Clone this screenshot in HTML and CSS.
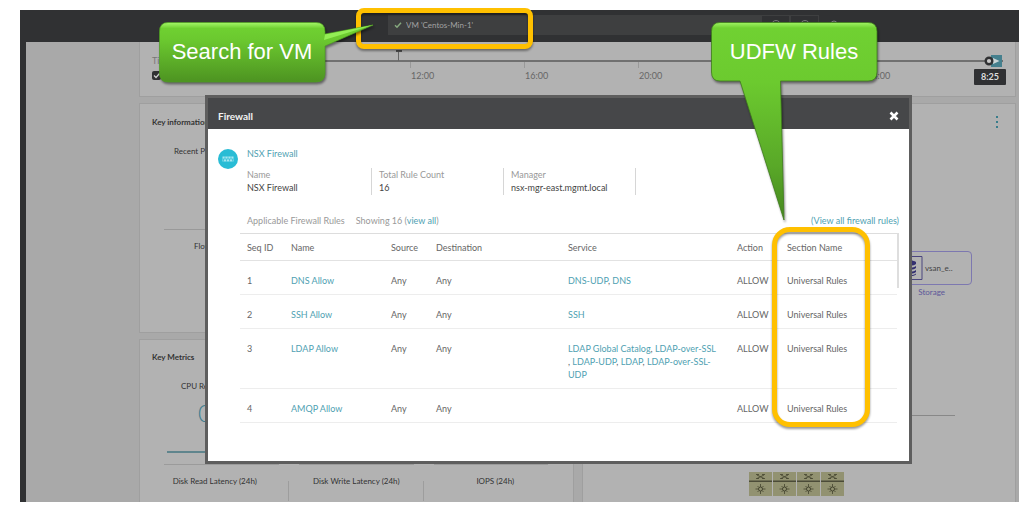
FILE: index.html
```html
<!DOCTYPE html>
<html lang="en">
<head>
<meta charset="utf-8">
<title>VM 'Centos-Min-1' - Firewall</title>
<link rel="stylesheet" href="styles.css">
</head>
<body>
<div class="app">
  <header class="topbar">
    <div class="search">
      <svg class="search-check" viewBox="0 0 8 8" aria-hidden="true"><path d="M1 4.2 3 6.2 7 1.8" fill="none" stroke="#86a97e" stroke-width="1.5"/></svg>
      <input class="search-input" type="text" value="VM 'Centos-Min-1'" aria-label="Search">
    </div>
    <button class="top-btn" aria-label="Search now"><svg viewBox="0 0 14 14"><circle cx="7" cy="7" r="4.5" fill="none" stroke="#77787a"/><path d="M10 10l3 3" stroke="#77787a"/></svg></button>
    <button class="top-btn" aria-label="Time"><svg viewBox="0 0 14 14"><circle cx="7" cy="7" r="4.5" fill="none" stroke="#77787a"/><path d="M7 4v3h3" fill="none" stroke="#77787a"/></svg></button>
    <button class="top-btn plain" aria-label="Alerts"><svg viewBox="0 0 14 14"><path d="M4 10V6a3 3 0 0 1 6 0v4z" fill="none" stroke="#77787a"/></svg></button>
  </header>
  <div class="rail"></div>
  <main class="board">
    <section class="card timeline">
      <div class="timeline-head">
        <span>Time</span>
        <label class="check"><input type="checkbox" checked aria-label="Show timeline"><svg viewBox="0 0 9 9" aria-hidden="true"><path d="M2 4.500 4 6.500 7.500 2.500" fill="none" stroke="#d0d0d0" stroke-width="1.200"/></svg></label>
      </div>
      <ol class="axis">
        <li>08:00</li><li>12:00</li><li>16:00</li><li>20:00</li><li>00:00</li><li class="last">04:00</li>
      </ol>
      <span class="event"></span>
      <svg class="knob" viewBox="0 0 20 14" aria-hidden="true"><path d="M8 1h11v12H8z" fill="#45808e"/><path d="M10 4 16.500 7l-6.500 3z" fill="#ccd6d8"/><circle cx="6" cy="7" r="3.300" fill="#c8c8c8" stroke="#303133" stroke-width="2.400"/></svg>
      <span class="now">8:25</span>
    </section>

    <section class="card info">
      <h2>Key information</h2>
      <p class="info-problems">Recent Problems</p>
      <hr>
      <p class="info-flows">Flows</p>
    </section>

    <section class="card metrics">
      <h2>Key Metrics</h2>
      <p class="metric-name">CPU Ready Rate</p>
      <p class="metric-value">0</p>
      <div class="spark"></div>
      <div class="rules"><span></span><span></span><span></span></div>
      <div class="tiles"><span>Disk Read Latency (24h)</span><span>Disk Write Latency (24h)</span><span>IOPS (24h)</span></div>
    </section>

    <section class="card topology">
      <button class="more" aria-label="More options"><i></i><i></i><i></i></button>
      <div class="node">
        <svg viewBox="0 0 24 24" aria-hidden="true"><path d="M1 .5h22v23H1z" fill="none" stroke="#4b467e"/><g fill="#343071"><path d="M7 6c3-2 7-2 10 0v2c-3 2-7 2-10 0zM7 10c3 2 7 2 10 0v2c-3 2-7 2-10 0zM7 14c3 2 7 2 10 0v2c-3 2-7 2-10 0zM7 17.500c3 2 7 2 10 0v1c-3 2-7 2-10 0z"/></g></svg>
        <span>vsan_e..</span>
      </div>
      <span class="node-label">Storage</span>
      <span class="link"></span>
      <svg class="hosts" viewBox="0 0 96 24" aria-hidden="true">
        <defs><g id="host"><path d="M0 0h23v24H0z" fill="#929271"/><path d="M0 8.500h23v1.500H0z" fill="#4b4b38"/><path d="M8 3 15 6.500M8 6.500 15 3M7 2.500h3M13 2.500h3M7 6.500h3M13 6.500h3" stroke="#44442f" stroke-width=".8" fill="none"/><circle cx="11.500" cy="17" r="2" fill="none" stroke="#44442f"/><path d="M11.500 12v3M11.500 19v3M6.500 17h3M13.500 17h3M8.500 14l1.500 1.500M14.500 14 13 15.500M8.500 20l1.500-1.500M14.500 20 13 18.500" stroke="#44442f" stroke-width=".8"/></g></defs>
        <use href="#host"/><use href="#host" x="24"/><use href="#host" x="48"/><use href="#host" x="72"/>
      </svg>
    </section>
  </main>

  <div class="dialog" role="dialog" aria-labelledby="dialog-title">
    <div class="dialog-head">
      <h1 id="dialog-title">Firewall</h1>
      <button class="close" aria-label="Close"><svg viewBox="0 0 10 10"><path d="M1.500 1.500l7 7M8.500 1.500l-7 7" stroke="#fff" stroke-width="2.600"/></svg></button>
    </div>
    <div class="dialog-body">
      <svg class="fw-icon" viewBox="0 0 20 20" aria-hidden="true"><circle cx="10" cy="10" r="10" fill="#29bcd5"/><path d="M4.500 7.500h11v5h-11z" fill="#a5e6f0"/><path d="M4.500 10h11M7 7.500V10M10 7.500V10M13 7.500V10M5.500 10v2.500M8.500 10v2.500M11.500 10v2.500M14.500 10v2.500" stroke="#29bcd5" stroke-width=".7"/></svg>
      <div class="details">
        <a class="fw-name" href="#">NSX Firewall</a>
        <dl class="facts">
          <div><dt>Name</dt><dd>NSX Firewall</dd></div>
          <div><dt>Total Rule Count</dt><dd>16</dd></div>
          <div><dt>Manager</dt><dd>nsx-mgr-east.mgmt.local</dd></div>
        </dl>
        <div class="summary">
          <span>Applicable Firewall Rules</span>
          <span>Showing 16 (<a href="#">view all</a>)</span>
          <a class="all-rules" href="#">(View all firewall rules)</a>
        </div>
      </div>
      <div class="rules-list">
        <table>
          <colgroup><col class="c-seq"><col class="c-name"><col class="c-src"><col class="c-dst"><col class="c-svc"><col class="c-act"><col></colgroup>
          <thead><tr><th>Seq ID</th><th>Name</th><th>Source</th><th>Destination</th><th>Service</th><th>Action</th><th>Section Name</th></tr></thead>
          <tbody>
            <tr><td>1</td><td><a href="#">DNS Allow</a></td><td>Any</td><td>Any</td><td><a href="#">DNS-UDP</a>, <a href="#">DNS</a></td><td>ALLOW</td><td>Universal Rules</td></tr>
            <tr><td>2</td><td><a href="#">SSH Allow</a></td><td>Any</td><td>Any</td><td><a href="#">SSH</a></td><td>ALLOW</td><td>Universal Rules</td></tr>
            <tr><td>3</td><td><a href="#">LDAP Allow</a></td><td>Any</td><td>Any</td><td><a href="#">LDAP Global Catalog</a>, <a href="#">LDAP-over-SSL</a><br>, <a href="#">LDAP-UDP</a>, <a href="#">LDAP</a>, <a href="#">LDAP-over-SSL-<br>UDP</a></td><td>ALLOW</td><td>Universal Rules</td></tr>
            <tr><td>4</td><td><a href="#">AMQP Allow</a></td><td>Any</td><td>Any</td><td></td><td>ALLOW</td><td>Universal Rules</td></tr>
          </tbody>
        </table>
        <div class="thumb"></div>
      </div>
    </div>
  </div>

  <div class="mark mark-search"></div>
  <div class="mark mark-section"></div>

  <div class="callout callout-search">
    <svg viewBox="0 0 220 66" aria-hidden="true">
      <defs>
        <linearGradient id="g1" x1="0" y1="0" x2="0" y2="1"><stop offset="0" stop-color="#a4f768"/><stop offset=".1" stop-color="#6fd031"/><stop offset=".3" stop-color="#6bc82f"/><stop offset="1" stop-color="#4d9321"/></linearGradient>
      </defs>
      <path d="M9 .5H157Q166 .5 166 9.500V12L214 3 166 24V51Q166 60 157 60H9Q.5 60 .5 51V9.500Q.5 .5 9 .5z" fill="url(#g1)" stroke="#4f9d22" stroke-width=".7"/>
      <path d="M166 12.500 214 3 165 18z" fill="#93ee55"/>
    </svg>
    <span>Search for VM</span>
  </div>
  <div class="callout callout-rules">
    <svg viewBox="0 0 220 200" aria-hidden="true">
      <defs>
        <linearGradient id="g2" x1="0" y1="0" x2="0" y2="200" gradientUnits="userSpaceOnUse"><stop offset="0" stop-color="#a4f768"/><stop offset=".03" stop-color="#70d132"/><stop offset=".3" stop-color="#6cca2f"/><stop offset=".72" stop-color="#59a828"/><stop offset="1" stop-color="#45861e"/></linearGradient>
      </defs>
      <path d="M9 .5H157Q166 .5 166 9.500V50Q166 59 157 59H69.500L73 198 29 59H9Q.5 59 .5 50V9.500Q.5 .5 9 .5z" fill="url(#g2)" stroke="#3f7d1c" stroke-width=".8"/>
    </svg>
    <span>UDFW Rules</span>
  </div>
</div>
</body>
</html>
```
FILE: styles.css
```css
* { box-sizing: border-box; }
body {
  margin: 0;
  padding: 10px 5px 8px 20px;
  min-height: 100vh;
  background: #fff;
  font: 9px/13px Lato, "Open Sans", sans-serif;
  color: #666;
}
h1, h2, p, dl, dd, ol { margin: 0; padding: 0; }
a { color: #4f9fb2; text-decoration: none; }
button { border: 0; padding: 0; background: none; }

.app {
  position: relative;
  min-height: calc(100vh - 18px);
  display: grid;
  grid-template: 32px 1fr / 6px 1fr;
  background: #a9a9a9;
}

.topbar {
  grid-column: 1 / -1;
  display: flex;
  align-items: flex-start;
  padding: 5px 171px 0 368px;
  background: #303133;
}
.search {
  flex: 1;
  display: flex;
  align-items: center;
  gap: 4px;
  height: 20px;
  padding-left: 6px;
  background: #3e3f40;
}
.search-check { width: 8px; height: 8px; }
.search-input {
  flex: 1;
  min-width: 0;
  border: 0;
  padding: 0;
  background: none;
  font: inherit;
  font-size: 8px;
  color: #a2a2a2;
}
.top-btn { width: 29px; height: 20px; border: 1px solid #3e3f40; }
.top-btn.plain { border-color: transparent; }
.top-btn svg { display: block; width: 14px; height: 14px; margin: auto; }

.rail { background: #303133; }
.board {
  display: grid;
  grid-template: 55px 230px 1fr / 1fr 1fr;
  gap: 6px 8px;
  padding: 0 3px 0 113px;
}
.card { position: relative; background: #b2b2b2; border: 1px solid #9f9f9f; }
.card h2 { font-size: 8px; line-height: 13px; font-weight: 700; color: #333; }

.timeline { grid-column: 1 / -1; display: flex; border-top: 0; }
.timeline-head { width: 156px; padding: 12px 0 0 12px; color: #777; }
.check { position: relative; display: block; width: 9px; margin-top: 4px; }
.check input {
  appearance: none;
  display: block;
  width: 9px;
  height: 9px;
  margin: 0;
  border-radius: 2px;
  background: #303133;
}
.check svg { position: absolute; left: 0; top: 0; width: 9px; height: 9px; }
.axis {
  flex: 1;
  display: flex;
  height: 36px;
  margin: 18px 12px 0 0;
  border-top: 2px solid #707070;
  list-style: none;
}
.axis li {
  flex: 114;
  padding: 7px 0 0 1px;
  background: linear-gradient(#999, #999) left top / 1px 6px no-repeat;
}
.axis .last { flex: 137; }
.event {
  position: absolute;
  left: 29.2%;
  top: 8px;
  width: 6px;
  height: 11px;
  border-top: 2px solid #505050;
  background: linear-gradient(#666, #666) center / 1px 100% no-repeat;
}
.knob { position: absolute; right: 12px; top: 12px; width: 20px; height: 14px; }
.now {
  position: absolute;
  right: 9px;
  top: 27px;
  width: 32px;
  padding: 1px 0 2px;
  border-radius: 1px;
  background: #303133;
  text-align: center;
  color: #ddd;
  font-weight: 700;
}

.info { padding: 12px 24px 0 12px; font-size: 8px; color: #333; }
.info-problems { margin: 16px 0 0 22px; }
.info hr { height: 1px; margin: 71px 0 10px 12px; border: 0; background: #999; }
.info-flows { padding-left: 42px; }

.metrics { border-bottom: 0; padding-top: 11px; font-size: 8px; color: #333; }
.metrics h2 { padding-left: 12px; }
.metric-name { padding: 16px 0 0 41px; }
.metric-value {
  padding: 5px 0 0 58px;
  font-size: 24px;
  line-height: 30px;
  font-weight: 300;
  color: #3f7f90;
}
.spark { height: 2px; margin: 23px 24px 0 27px; background: #5f858d; }
.rules { display: flex; gap: 20px; padding: 11px 24px 10px; }
.rules span { flex: 1; height: 1px; background: #9b9b9b; }
.tiles {
  display: grid;
  grid-template-columns: 147fr 135fr 142fr;
  padding: 0 6px 0 1px;
  text-align: center;
}
.tiles span {
  height: 26px;
  background: linear-gradient(#9d9d9d, #9d9d9d) right 6px / 1px 20px no-repeat;
}
.tiles span:last-child { background: none; }

.topology { grid-area: 2 / 2 / 4 / 3; border-bottom: 0; }
.more { position: absolute; right: 15px; top: 12px; width: 6px; }
.more i { display: block; width: 2px; height: 2px; margin: 0 auto 3px; background: #397d8b; }
.node {
  position: absolute;
  right: 43px;
  top: 147px;
  width: 76px;
  height: 34px;
  display: flex;
  align-items: center;
  gap: 2px;
  padding-left: 2px;
  border: 1px solid #7d78b0;
  border-radius: 4px;
  font-size: 8px;
  color: #444;
}
.node svg { width: 24px; height: 24px; }
.node-label { position: absolute; right: 70px; top: 182px; font-size: 8px; color: #5c5799; }
.link { position: absolute; right: 60px; top: 311px; width: 60px; height: 1px; background: #888; }
.hosts { position: absolute; right: 170px; top: 368px; width: 96px; height: 24px; }

.dialog {
  position: absolute;
  left: 185px;
  right: 107px;
  top: 85px;
  border: 3px solid #5e5e5e;
  background: #fff;
}
.dialog-head {
  display: flex;
  align-items: center;
  justify-content: space-between;
  height: 31px;
  padding: 4px 10px 0;
  background: #464749;
}
.dialog-head h1 { font-size: 10px; line-height: 16px; color: #f2f2f2; }
.close svg { display: block; width: 10px; height: 10px; }
.dialog-body {
  display: grid;
  grid-template-columns: 20px 1fr;
  column-gap: 9px;
  padding: 18px 10px 38px;
}
.fw-icon { width: 20px; height: 20px; margin-top: 2px; }
.fw-name { display: block; margin-bottom: 8px; }
.facts { display: flex; gap: 7px; height: 27px; }
.facts div { width: 125px; border-right: 1px solid #d6d6d6; }
.facts dt { color: #999; }
.facts dd { color: #444; }
.summary { display: flex; gap: 11px; margin: 19px 0 6px; color: #999; }
.all-rules { margin-left: auto; }

.rules-list { grid-column: 1 / -1; display: flex; margin-left: 22px; }
table {
  flex: 1;
  width: 100%;
  table-layout: fixed;
  border-collapse: separate;
  border-spacing: 0;
  border-top: 1px solid #ddd;
}
th, td { text-align: left; vertical-align: top; white-space: nowrap; font-weight: 400; }
th { padding: 7px 0 6px 7px; border-bottom: 1px solid #e2e2e2; }
td { padding: 13px 0 7px 7px; border-bottom: 1px solid #ededed; }
.c-seq { width: 44px; }
.c-name { width: 100px; }
.c-src { width: 45px; }
.c-dst { width: 132px; }
.c-svc { width: 169px; }
.c-act { width: 50px; }
.thumb { width: 2px; height: 55px; background: #dedede; }

.mark {
  position: absolute;
  border: 5px solid #ffc000;
  filter: drop-shadow(0 2px 1px rgba(0, 0, 0, .4));
}
.mark-search { left: 336px; top: -2px; width: 177px; height: 41px; border-radius: 8px; }
.mark-section { right: 149px; top: 217px; width: 98px; height: 200px; border-radius: 18px; }

.callout { position: absolute; top: 12px; width: 166px; height: 60px; }
.callout svg {
  position: absolute;
  left: 0;
  top: 0;
  width: 220px;
  filter: drop-shadow(1px 2px 1px rgba(0, 0, 0, .45));
}
.callout span {
  position: relative;
  display: block;
  font: 22px/60px "Liberation Sans", Arial, sans-serif;
  text-align: center;
  color: #fff;
}
.callout-search { left: 139px; }
.callout-rules { right: 142px; }
```
